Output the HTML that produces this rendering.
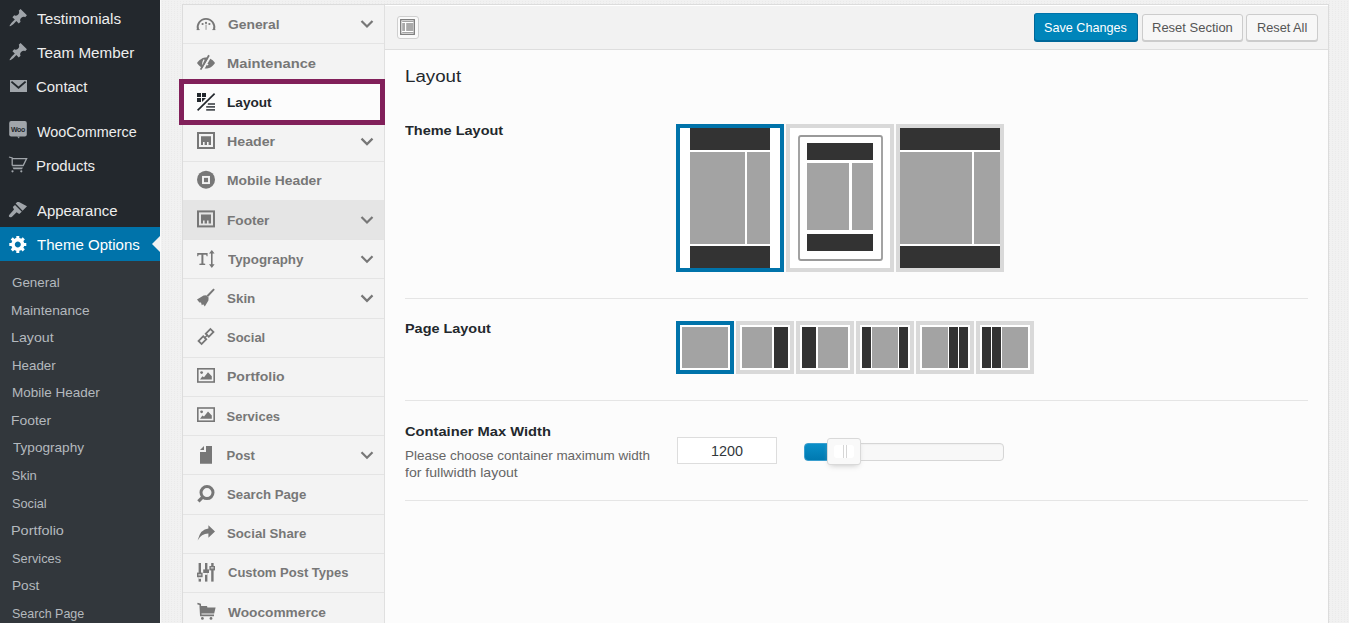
<!DOCTYPE html>
<html><head><meta charset="utf-8">
<style>
*{box-sizing:border-box;margin:0;padding:0}
html,body{width:1349px;height:623px;overflow:hidden;background:#f1f1f1;font-family:"Liberation Sans",sans-serif}
body{position:relative}
.a{position:absolute}
.tx{position:absolute;white-space:nowrap;transform-origin:0 0}
</style></head><body>
<div class="a" style="left:0;top:0;width:160px;height:623px;background:#23282d"></div>
<div class="a" style="left:0;top:227px;width:160px;height:34px;background:#0073aa"></div>
<div class="a" style="left:0;top:261px;width:160px;height:362px;background:#32373c"></div>
<div class="a" style="left:152px;top:235.8px;width:0;height:0;border-top:8px solid transparent;border-bottom:8px solid transparent;border-right:8px solid #f1f1f1"></div>
<div class="a" style="left:160px;top:0;width:1189px;height:623px;background-color:#f1f1f1;background-image:linear-gradient(90deg,#f1f1f1 2px,transparent 2px),linear-gradient(#f1f1f1 1px,#eaeaea 1px);background-size:3px 2px"></div>
<div class="a" style="left:160px;top:0;width:1px;height:623px;background:#fafafa"></div>
<div class="a" style="left:182px;top:4px;width:1147px;height:619px;background:#fcfcfc;border:1px solid #dcdcdc;border-bottom:0"></div>
<div class="a" style="left:183px;top:5px;width:202px;height:618px;background:#f3f3f3;border-right:1px solid #e0e0e0"></div>
<div class="a" style="left:183px;top:43.2px;width:201px;height:1px;background:#e4e4e4"></div><div class="a" style="left:183px;top:82.4px;width:201px;height:1px;background:#e4e4e4"></div><div class="a" style="left:183px;top:121.6px;width:201px;height:1px;background:#e4e4e4"></div><div class="a" style="left:183px;top:160.8px;width:201px;height:1px;background:#e4e4e4"></div><div class="a" style="left:183px;top:200.0px;width:201px;height:1px;background:#e4e4e4"></div><div class="a" style="left:183px;top:239.2px;width:201px;height:1px;background:#e4e4e4"></div><div class="a" style="left:183px;top:278.4px;width:201px;height:1px;background:#e4e4e4"></div><div class="a" style="left:183px;top:317.6px;width:201px;height:1px;background:#e4e4e4"></div><div class="a" style="left:183px;top:356.8px;width:201px;height:1px;background:#e4e4e4"></div><div class="a" style="left:183px;top:396.0px;width:201px;height:1px;background:#e4e4e4"></div><div class="a" style="left:183px;top:435.2px;width:201px;height:1px;background:#e4e4e4"></div><div class="a" style="left:183px;top:474.4px;width:201px;height:1px;background:#e4e4e4"></div><div class="a" style="left:183px;top:513.6px;width:201px;height:1px;background:#e4e4e4"></div><div class="a" style="left:183px;top:552.8px;width:201px;height:1px;background:#e4e4e4"></div><div class="a" style="left:183px;top:592.0px;width:201px;height:1px;background:#e4e4e4"></div>
<div class="a" style="left:183px;top:200.2px;width:201px;height:39.2px;background:#e5e5e5"></div>
<div class="a" style="left:183px;top:83.4px;width:201px;height:38.2px;background:#fcfcfc"></div>
<div class="a" style="left:179.4px;top:79.4px;width:206px;height:46px;border:5.2px solid #81205a"></div>
<div class="a" style="left:385px;top:5px;width:943px;height:45px;background:#f2f2f2;border-bottom:1px solid #dedede;box-shadow:inset 0 1px 0 #fff"></div>
<div class="a" style="left:396.5px;top:15.5px;width:22.5px;height:23.5px;background:#fafafa;border:1px solid #cfcfcf;border-radius:3px"></div>
<div class="a" style="left:1034px;top:13px;width:104px;height:28px;background:#0085ba;border:1px solid #0073aa;border-color:#0073aa #006799 #006799;border-radius:3px;box-shadow:0 1px 0 #006799"></div>
<div class="a" style="left:1142px;top:13.5px;width:101px;height:27px;background:#f7f7f7;border:1px solid #ccc;border-radius:3px;box-shadow:0 1px 0 #ccc"></div>
<div class="a" style="left:1246px;top:13.5px;width:72px;height:27px;background:#f7f7f7;border:1px solid #ccc;border-radius:3px;box-shadow:0 1px 0 #ccc"></div>
<div class="a" style="left:405px;top:298px;width:903px;height:1px;background:#e5e5e5"></div>
<div class="a" style="left:405px;top:400px;width:903px;height:1px;background:#e5e5e5"></div>
<div class="a" style="left:405px;top:500px;width:903px;height:1px;background:#e5e5e5"></div>
<div class="a" style="left:677px;top:437px;width:100px;height:27px;background:#fff;border:1px solid #ddd"></div>
<div class="a" style="left:803.5px;top:443px;width:200px;height:18px;background:#f8f8f8;border:1px solid #d6d6d6;border-radius:4px;box-shadow:inset 0 1px 1px #f0f0f0"></div>
<div class="a" style="left:803.5px;top:443px;width:30px;height:18px;background:linear-gradient(#0a8fc8,#0079b0);border:1px solid #3a9fcf;border-radius:4px 0 0 4px"></div>
<div class="a" style="left:827px;top:438px;width:34px;height:27px;background:#f9f9f9;border:1px solid #d9d9d9;border-radius:3px;box-shadow:0 3px 6px -3px #bbb"></div>
<div class="a" style="left:833.5px;top:444.5px;width:20px;height:13px;background:#fff;border-radius:3px"></div>
<div class="a" style="left:842.5px;top:445px;width:1px;height:13px;background:#d6d6d6"></div>
<div class="a" style="left:845.5px;top:445px;width:1px;height:13px;background:#d6d6d6"></div>
<svg class="a" style="left:0;top:0" width="1349" height="623" viewBox="0 0 1349 623">
<g transform="translate(0,0)">
<rect x="400.7" y="19.7" width="13.6" height="14.6" fill="#fff" stroke="#7a7a7a" stroke-width="1.3"/>
<rect x="402.2" y="21.1" width="11.4" height="0.9" fill="#999"/>
<rect x="402.2" y="23" width="2.8" height="8" fill="#aaa"/><rect x="406.2" y="23" width="7.2" height="8" fill="#aaa"/>
<rect x="402.2" y="32" width="11.4" height="0.9" fill="#999"/>
</g>
<g transform="translate(8.3,7.8)"><path d="M10.44 3.02l1.82-1.82 6.36 6.35-1.83 1.82c-1.05-.68-2.48-.57-3.41.36l-.75.75c-.92.93-1.04 2.35-.35 3.41l-1.83 1.82-2.41-2.41-2.8 2.79c-.42.42-3.38 2.71-3.8 2.29s1.86-3.39 2.28-3.81l2.79-2.79L4.1 9.36l1.83-1.82c1.05.69 2.48.57 3.4-.36l.75-.75c.93-.92 1.05-2.35.36-3.41z" fill="#a0a5aa"/></g>
<g transform="translate(8.3,41.8)"><path d="M10.44 3.02l1.82-1.82 6.36 6.35-1.83 1.82c-1.05-.68-2.48-.57-3.41.36l-.75.75c-.92.93-1.04 2.35-.35 3.41l-1.83 1.82-2.41-2.41-2.8 2.79c-.42.42-3.38 2.71-3.8 2.29s1.86-3.39 2.28-3.81l2.79-2.79L4.1 9.36l1.83-1.82c1.05.69 2.48.57 3.4-.36l.75-.75c.93-.92 1.05-2.35.36-3.41z" fill="#a0a5aa"/></g>
<rect x="10" y="80" width="17" height="12" fill="#a0a5aa"/><path d="M11.4,81.6 L18.5,87.8 L25.6,81.6" fill="none" stroke="#23282d" stroke-width="1.9"/>
<rect x="9.2" y="121" width="17.6" height="15.6" rx="2" fill="#a0a5aa"/><path d="M17,136.5 L19,138.6 L19.6,136.5Z" fill="#a0a5aa"/><text x="18" y="131.6" font-family="Liberation Sans" font-size="7" font-weight="bold" fill="#23282d" text-anchor="middle" letter-spacing="-0.3">Woo</text>
<path d="M9,157 L12.2,158 L12.2,165.5 M12.2,158.6 L26.6,158.6 L23.2,165.5 L12.2,165.5" fill="none" stroke="#a0a5aa" stroke-width="1.3"/><path d="M12.5,167.6 L23,167.6 L22,169.2 L13.5,169.2Z" fill="#a0a5aa"/><circle cx="12.5" cy="171.3" r="1.1" fill="#a0a5aa"/><circle cx="21.3" cy="171.3" r="1.1" fill="#a0a5aa"/>
<path d="M17.2,202 L19,201.9 L27,206.3 L22.6,210.7 L15.6,203.6Z M15,205 L21.8,211.8 L19.2,214.1 L16.6,212.3 L12,216.8 Q10,218 8.9,216.6 Q8.6,215.6 9.6,214.6 L14,209.6 L12.8,207.1Z" fill="#a0a5aa"/>
<g transform="translate(8.3,233.9)"><path d="M18 12h-2.18c-.17.7-.44 1.35-.81 1.93l1.54 1.54-2.1 2.1-1.54-1.54c-.58.36-1.23.63-1.91.79V19H8v-2.18c-.68-.16-1.330-.43-1.91-.79l-1.54 1.54-2.120-2.120 1.54-1.54c-.36-.58-.63-1.23-.79-1.91H1V9.03h2.17c.16-.7.44-1.35.8-1.94L2.43 5.55l2.1-2.1 1.54 1.54c.58-.37 1.24-.64 1.93-.81V2h3v2.18c.68.16 1.33.43 1.91.79l1.54-1.54 2.12 2.12-1.54 1.54c.36.59.64 1.24.8 1.94H18V12zm-8.5 1.5c1.66 0 3-1.34 3-3s-1.34-3-3-3-3 1.34-3 3 1.34 3 3 3z" fill="#fff"/></g>
<path d="M198.11,29.76 A8.3,8.3 0 1 1 213.89,29.76" fill="none" stroke="#777" stroke-width="1.9"/><path d="M196.6,29.6 L199.6,29.6 M212.4,29.6 L215.4,29.6" stroke="#777" stroke-width="1"/><circle cx="202.6" cy="24" r="1.1" fill="#777"/><circle cx="209.4" cy="24" r="1.1" fill="#777"/><circle cx="206" cy="22.9" r="1.1" fill="#777"/><rect x="205.3" y="24.6" width="1.5" height="5.2" fill="#777" opacity="0.5"/>
<path d="M197,63 C200,58.6 203.4,57.4 206,57.4 C208.6,57.4 212,58.6 215,63 C212,67.4 208.6,68.6 206,68.6 C203.4,68.6 200,67.4 197,63Z" fill="#777"/><path d="M204.2,59.6 Q201.8,62.8 203.6,66.4" fill="none" stroke="#f3f3f3" stroke-width="1.3"/><path d="M211.2,55 L202.6,70" stroke="#f3f3f3" stroke-width="2.2"/><path d="M209,55.2 L200.6,69.6" stroke="#777" stroke-width="1.8"/><circle cx="207.6" cy="64.6" r="0.8" fill="#f3f3f3"/>
<g fill="#23282d"><rect x="197" y="93" width="4" height="4"/><rect x="202" y="93" width="4" height="4"/><rect x="197" y="98" width="4" height="4"/><path d="M202,98 L206,98 L202,102Z"/><rect x="207.8" y="103.3" width="7.2" height="1.4"/><rect x="206.2" y="106.2" width="8.8" height="1.4"/><rect x="206.2" y="109.2" width="8.8" height="1.4"/></g><path d="M197.6,110.4 L214.6,93.6" stroke="#fcfcfc" stroke-width="3.6"/><path d="M197.6,110.4 L214.6,93.6" stroke="#23282d" stroke-width="1.7"/>
<g transform="translate(0,0.00)"><rect x="198" y="133" width="16" height="15" fill="none" stroke="#777" stroke-width="2"/><path d="M201,136.2 L211,136.2 L211,145 L208.6,145 L208.6,142 L207,142 L207,145 L204.6,145 L204.6,142 L203,142 L203,145 L201,145Z" fill="#777"/></g>
<g transform="translate(0,78.40)"><rect x="198" y="133" width="16" height="15" fill="none" stroke="#777" stroke-width="2"/><path d="M201,136.2 L211,136.2 L211,145 L208.6,145 L208.6,142 L207,142 L207,145 L204.6,145 L204.6,142 L203,142 L203,145 L201,145Z" fill="#777"/></g>
<circle cx="206" cy="179.7" r="9" fill="#777"/><rect x="203" y="176.9" width="6" height="6.2" fill="none" stroke="#f3f3f3" stroke-width="1.9"/>
<path d="M197.2,253 L207.6,253 L207.6,256.2 L206.6,256.2 L206.2,254.8 L203.4,254.8 L203.4,263.6 L205.2,263.8 L205.2,265 L199.4,265 L199.4,263.8 L201.4,263.6 L201.4,254.8 L198.6,254.8 L198.2,256.2 L197.2,256.2Z" fill="#777"/><path d="M211.8,251.5 L211.8,266.5" stroke="#777" stroke-width="1.6"/><path d="M209,253.6 L211.8,250 L214.6,253.6Z M209,264.3 L211.8,267.9 L214.6,264.3Z" fill="#777"/>
<path d="M214.8,289.8 L213.4,288.6 L206.6,295.6 L208,297Z" fill="#777"/><path d="M197,299.6 L203.6,295.6 L206.2,295.2 L208.6,297.6 L208.4,300.4 L204.8,306.6 L203.2,304.2 L201.8,305.2 L201,302.4 L199.4,302.6Z" fill="#777"/>
<g fill="none" stroke="#777" stroke-width="1.8"><rect x="-3.3" y="-2.15" width="6.6" height="4.3" transform="translate(209.6,332.9) rotate(-45)"/><rect x="-3.3" y="-2.15" width="6.6" height="4.3" transform="translate(202.4,340.1) rotate(-45)"/></g><path d="M204.3,338.2 L207.7,334.8" stroke="#777" stroke-width="1.4"/>
<g transform="translate(0,0.00)"><rect x="197.8" y="368.8" width="16.4" height="13.2" fill="none" stroke="#777" stroke-width="1.6"/><circle cx="201.6" cy="372.6" r="1.4" fill="#777"/><path d="M200,379.6 L202.4,376.3 L204,377.3 L208,372.3 L211.8,376.2 L211.8,379.6Z" fill="#777"/></g>
<g transform="translate(0,39.20)"><rect x="197.8" y="368.8" width="16.4" height="13.2" fill="none" stroke="#777" stroke-width="1.6"/><circle cx="201.6" cy="372.6" r="1.4" fill="#777"/><path d="M200,379.6 L202.4,376.3 L204,377.3 L208,372.3 L211.8,376.2 L211.8,379.6Z" fill="#777"/></g>
<path d="M206,446 L212,446 L212,463.8 L200,463.8 L200,452 L206,452Z M200,450 L204,446 L204,450Z" fill="#777"/>
<circle cx="207" cy="492.6" r="6" fill="none" stroke="#777" stroke-width="3"/><path d="M202.4,497.4 L198.4,501.4" stroke="#777" stroke-width="3.2"/>
<path d="M215,531.5 L208.4,525.2 L208.4,528.6 Q200.5,529 197.6,540.4 Q201.5,533.5 208.4,533.6 L208.4,537.8Z" fill="#777"/>
<g fill="#777"><rect x="198.6" y="563" width="2.4" height="18.6"/><rect x="205" y="563" width="2.4" height="18.6"/><rect x="211.2" y="563" width="2.4" height="18.6"/><rect x="197" y="572.6" width="5.6" height="4.6"/><rect x="203.2" y="569.4" width="5.8" height="3.6"/><rect x="209.4" y="566" width="5.6" height="4.4"/></g><g fill="#f3f3f3"><rect x="198.4" y="574.4" width="2.8" height="1"/><rect x="205" y="573" width="2.4" height="1.8"/><rect x="210.8" y="567.4" width="2.8" height="1"/><rect x="198.6" y="577.2" width="2.4" height="1.6"/></g>
<path d="M197.4,603.6 L200.2,604.4 L200.8,615.4 L214,615.4" fill="none" stroke="#777" stroke-width="1.6"/><path d="M200.6,606 L207,606 L207.4,607.4 L215.6,607.4 L214.2,613.6 L200.8,613.6Z" fill="#777"/><circle cx="202.4" cy="618.4" r="1.4" fill="#777"/><circle cx="211" cy="618.4" r="1.4" fill="#777"/>
<path d="M361.5,21.0 L367,26.5 L372.5,21.0" fill="none" stroke="#777" stroke-width="2.2"/>
<path d="M361.5,138.60000000000002 L367,144.10000000000002 L372.5,138.60000000000002" fill="none" stroke="#777" stroke-width="2.2"/>
<path d="M361.5,217.0 L367,222.5 L372.5,217.0" fill="none" stroke="#777" stroke-width="2.2"/>
<path d="M361.5,256.20000000000005 L367,261.70000000000005 L372.5,256.20000000000005" fill="none" stroke="#777" stroke-width="2.2"/>
<path d="M361.5,295.40000000000003 L367,300.90000000000003 L372.5,295.40000000000003" fill="none" stroke="#777" stroke-width="2.2"/>
<path d="M361.5,452.20000000000005 L367,457.70000000000005 L372.5,452.20000000000005" fill="none" stroke="#777" stroke-width="2.2"/>
<rect x="678" y="126" width="104" height="144" fill="#fff" stroke="#0073aa" stroke-width="4"/>
<rect x="690" y="128" width="80" height="22" fill="#333"/><rect x="690" y="152" width="55" height="92" fill="#a3a3a3"/><rect x="747" y="152" width="23" height="92" fill="#a3a3a3"/><rect x="690" y="246" width="80" height="22" fill="#333"/>
<rect x="788" y="126" width="104" height="144" fill="#fff" stroke="#d9d9d9" stroke-width="4"/>
<rect x="799" y="136" width="83" height="124" rx="2" fill="none" stroke="#9a9a9a" stroke-width="1.8"/><rect x="807" y="143" width="66" height="17" fill="#333"/><rect x="807" y="163" width="42" height="67" fill="#a3a3a3"/><rect x="852" y="163" width="21" height="67" fill="#a3a3a3"/><rect x="807" y="234" width="66" height="17" fill="#333"/>
<rect x="898" y="126" width="104" height="144" fill="#fff" stroke="#d9d9d9" stroke-width="4"/>
<rect x="900" y="128" width="100" height="22" fill="#333"/><rect x="900" y="152" width="72" height="92" fill="#a3a3a3"/><rect x="974" y="152" width="26" height="92" fill="#a3a3a3"/><rect x="900" y="246" width="100" height="22" fill="#333"/>
<rect x="678" y="323" width="54" height="49" fill="#fff" stroke="#0073aa" stroke-width="4"/>
<rect x="682" y="327" width="46" height="41" fill="#a3a3a3"/>
<rect x="738" y="323" width="54" height="49" fill="#fff" stroke="#d9d9d9" stroke-width="4"/>
<rect x="742" y="327" width="30" height="41" fill="#a3a3a3"/>
<rect x="774" y="327" width="14" height="41" fill="#333"/>
<rect x="798" y="323" width="54" height="49" fill="#fff" stroke="#d9d9d9" stroke-width="4"/>
<rect x="802" y="327" width="14" height="41" fill="#333"/>
<rect x="818" y="327" width="30" height="41" fill="#a3a3a3"/>
<rect x="858" y="323" width="54" height="49" fill="#fff" stroke="#d9d9d9" stroke-width="4"/>
<rect x="862" y="327" width="9" height="41" fill="#333"/>
<rect x="872" y="327" width="26" height="41" fill="#a3a3a3"/>
<rect x="899" y="327" width="9" height="41" fill="#333"/>
<rect x="918" y="323" width="54" height="49" fill="#fff" stroke="#d9d9d9" stroke-width="4"/>
<rect x="922" y="327" width="26" height="41" fill="#a3a3a3"/>
<rect x="949" y="327" width="9" height="41" fill="#333"/>
<rect x="959" y="327" width="9" height="41" fill="#333"/>
<rect x="978" y="323" width="54" height="49" fill="#fff" stroke="#d9d9d9" stroke-width="4"/>
<rect x="982" y="327" width="9" height="41" fill="#333"/>
<rect x="992" y="327" width="9" height="41" fill="#333"/>
<rect x="1002" y="327" width="26" height="41" fill="#a3a3a3"/>
</svg>
<div class="tx" style="left:36.7px;top:12px;font-size:14px;line-height:14px;font-weight:400;color:#eee;transform:scaleX(1.0922)">Testimonials</div>
<div class="tx" style="left:36.7px;top:46px;font-size:14px;line-height:14px;font-weight:400;color:#eee;transform:scaleX(1.0865)">Team Member</div>
<div class="tx" style="left:35.6px;top:80px;font-size:14px;line-height:14px;font-weight:400;color:#eee;transform:scaleX(1.0660)">Contact</div>
<div class="tx" style="left:36.7px;top:125px;font-size:14px;line-height:14px;font-weight:400;color:#eee;transform:scaleX(1.0278)">WooCommerce</div>
<div class="tx" style="left:35.6px;top:159px;font-size:14px;line-height:14px;font-weight:400;color:#eee;transform:scaleX(1.0685)">Products</div>
<div class="tx" style="left:36.7px;top:204px;font-size:14px;line-height:14px;font-weight:400;color:#eee;transform:scaleX(1.0653)">Appearance</div>
<div class="tx" style="left:36.7px;top:238px;font-size:14px;line-height:14px;font-weight:400;color:#fff;transform:scaleX(1.0737)">Theme Options</div>
<div class="tx" style="left:11.5px;top:276px;font-size:13px;line-height:13px;font-weight:400;color:#b4b9be;transform:scaleX(1.0295)">General</div>
<div class="tx" style="left:11.4px;top:304px;font-size:13px;line-height:13px;font-weight:400;color:#b4b9be;transform:scaleX(1.0562)">Maintenance</div>
<div class="tx" style="left:11.4px;top:331px;font-size:13px;line-height:13px;font-weight:400;color:#b4b9be;transform:scaleX(1.0921)">Layout</div>
<div class="tx" style="left:11.5px;top:359px;font-size:13px;line-height:13px;font-weight:400;color:#b4b9be;transform:scaleX(1.0238)">Header</div>
<div class="tx" style="left:11.5px;top:386px;font-size:13px;line-height:13px;font-weight:400;color:#b4b9be;transform:scaleX(1.0381)">Mobile Header</div>
<div class="tx" style="left:11.4px;top:414px;font-size:13px;line-height:13px;font-weight:400;color:#b4b9be;transform:scaleX(1.0676)">Footer</div>
<div class="tx" style="left:12.5px;top:441px;font-size:13px;line-height:13px;font-weight:400;color:#b4b9be;transform:scaleX(1.0456)">Typography</div>
<div class="tx" style="left:11.5px;top:469px;font-size:13px;line-height:13px;font-weight:400;color:#b4b9be;transform:scaleX(1.0000)">Skin</div>
<div class="tx" style="left:11.5px;top:497px;font-size:13px;line-height:13px;font-weight:400;color:#b4b9be;transform:scaleX(0.9794)">Social</div>
<div class="tx" style="left:11.4px;top:524px;font-size:13px;line-height:13px;font-weight:400;color:#b4b9be;transform:scaleX(1.1087)">Portfolio</div>
<div class="tx" style="left:11.5px;top:552px;font-size:13px;line-height:13px;font-weight:400;color:#b4b9be;transform:scaleX(0.9854)">Services</div>
<div class="tx" style="left:11.5px;top:579px;font-size:13px;line-height:13px;font-weight:400;color:#b4b9be;transform:scaleX(1.0480)">Post</div>
<div class="tx" style="left:11.5px;top:607px;font-size:13px;line-height:13px;font-weight:400;color:#b4b9be;transform:scaleX(0.9608)">Search Page</div>
<div class="tx" style="left:227.6px;top:18px;font-size:13px;line-height:13px;font-weight:700;color:#777;transform:scaleX(1.0646)">General</div>
<div class="tx" style="left:226.5px;top:57px;font-size:13px;line-height:13px;font-weight:700;color:#777;transform:scaleX(1.1299)">Maintenance</div>
<div class="tx" style="left:226.6px;top:96px;font-size:13px;line-height:13px;font-weight:700;color:#23282d;transform:scaleX(1.0476)">Layout</div>
<div class="tx" style="left:226.5px;top:135px;font-size:13px;line-height:13px;font-weight:700;color:#777;transform:scaleX(1.0907)">Header</div>
<div class="tx" style="left:226.5px;top:174px;font-size:13px;line-height:13px;font-weight:700;color:#777;transform:scaleX(1.0659)">Mobile Header</div>
<div class="tx" style="left:226.6px;top:214px;font-size:13px;line-height:13px;font-weight:700;color:#777;transform:scaleX(1.0475)">Footer</div>
<div class="tx" style="left:227.6px;top:253px;font-size:13px;line-height:13px;font-weight:700;color:#777;transform:scaleX(1.0274)">Typography</div>
<div class="tx" style="left:226.6px;top:292px;font-size:13px;line-height:13px;font-weight:700;color:#777;transform:scaleX(1.0308)">Skin</div>
<div class="tx" style="left:226.6px;top:331px;font-size:13px;line-height:13px;font-weight:700;color:#777;transform:scaleX(0.9973)">Social</div>
<div class="tx" style="left:226.5px;top:370px;font-size:13px;line-height:13px;font-weight:700;color:#777;transform:scaleX(1.0788)">Portfolio</div>
<div class="tx" style="left:226.6px;top:410px;font-size:13px;line-height:13px;font-weight:700;color:#777;transform:scaleX(1.0000)">Services</div>
<div class="tx" style="left:226.6px;top:449px;font-size:13px;line-height:13px;font-weight:700;color:#777;transform:scaleX(1.0000)">Post</div>
<div class="tx" style="left:226.6px;top:488px;font-size:13px;line-height:13px;font-weight:700;color:#777;transform:scaleX(1.0156)">Search Page</div>
<div class="tx" style="left:226.6px;top:527px;font-size:13px;line-height:13px;font-weight:700;color:#777;transform:scaleX(1.0156)">Social Share</div>
<div class="tx" style="left:227.6px;top:566px;font-size:13px;line-height:13px;font-weight:700;color:#777;transform:scaleX(1.0008)">Custom Post Types</div>
<div class="tx" style="left:227.6px;top:606px;font-size:13px;line-height:13px;font-weight:700;color:#777;transform:scaleX(1.0538)">Woocommerce</div>
<div class="tx" style="left:404.6px;top:69px;font-size:16px;line-height:16px;font-weight:400;color:#23282d;transform:scaleX(1.1681)">Layout</div>
<div class="tx" style="left:405.3px;top:124px;font-size:13px;line-height:13px;font-weight:700;color:#23282d;transform:scaleX(1.1136)">Theme Layout</div>
<div class="tx" style="left:404.5px;top:322px;font-size:13px;line-height:13px;font-weight:700;color:#23282d;transform:scaleX(1.1092)">Page Layout</div>
<div class="tx" style="left:405.3px;top:425px;font-size:13px;line-height:13px;font-weight:700;color:#23282d;transform:scaleX(1.1295)">Container Max Width</div>
<div class="tx" style="left:404.5px;top:449px;font-size:13px;line-height:13px;font-weight:400;color:#666;transform:scaleX(1.0370)">Please choose container maximum width</div>
<div class="tx" style="left:404.8px;top:466px;font-size:13px;line-height:13px;font-weight:400;color:#666;transform:scaleX(1.0837)">for fullwidth layout</div>
<div class="tx" style="left:710.8px;top:444px;font-size:14px;line-height:14px;font-weight:400;color:#32373c;transform:scaleX(1.0267)">1200</div>
<div class="tx" style="left:1044.4px;top:21px;font-size:13px;line-height:13px;font-weight:400;color:#fff;transform:scaleX(0.9714)">Save Changes</div>
<div class="tx" style="left:1151.6px;top:21px;font-size:13px;line-height:13px;font-weight:400;color:#555;transform:scaleX(0.9987)">Reset Section</div>
<div class="tx" style="left:1256.5px;top:21px;font-size:13px;line-height:13px;font-weight:400;color:#555;transform:scaleX(0.9800)">Reset All</div>
</body></html>
